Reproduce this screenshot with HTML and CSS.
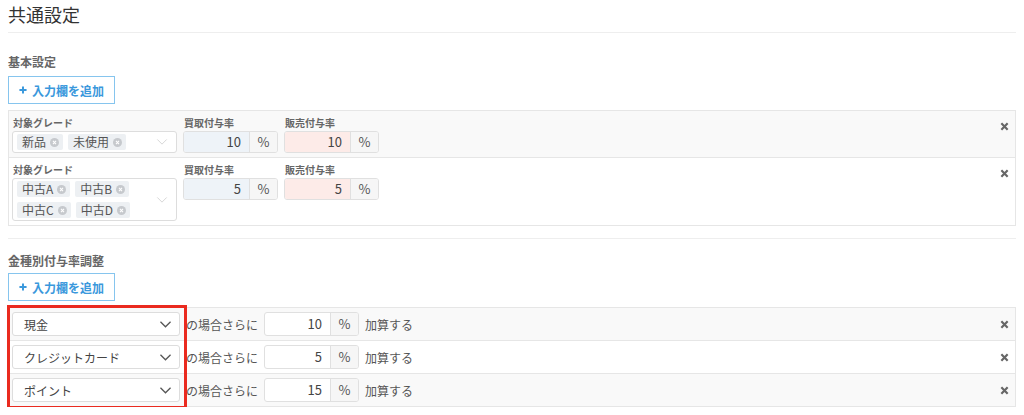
FILE: index.html
```html
<!DOCTYPE html>
<html lang="ja">
<head>
  <meta charset="UTF-8">
  <title>共通設定</title>
  <meta name="viewport" content="width=device-width, initial-scale=1.0">
  <link rel="stylesheet" href="styles.css">
</head>
<body>
  <h2 class="page-title">共通設定</h2>

  <section class="block">
    <h3 class="block-title">基本設定</h3>
    <button class="add-btn">
      <svg class="plus" viewBox="0 0 9 9"><path d="M4.5 0.5V8.5M0.5 4.5H8.5"/></svg>
      入力欄を追加
    </button>

    <div class="rows">
      <div class="row grade-row">
        <div class="field">
          <div class="field-label">対象グレード</div>
          <div class="tag-select">
            <div class="tags">
              <span class="tag">新品<i class="tag-x"><svg viewBox="0 0 10 10"><circle cx="5" cy="5" r="5"/><path d="M3.3 3.3L6.7 6.7M6.7 3.3L3.3 6.7"/></svg></i></span>
              <span class="tag">未使用<i class="tag-x"><svg viewBox="0 0 10 10"><circle cx="5" cy="5" r="5"/><path d="M3.3 3.3L6.7 6.7M6.7 3.3L3.3 6.7"/></svg></i></span>
            </div>
            <svg class="chev light" viewBox="0 0 12 7"><path d="M0.5 0.5L6 6L11.5 0.5"/></svg>
          </div>
        </div>
        <div class="field">
          <div class="field-label">買取付与率</div>
          <div class="input-group">
            <span class="num buy">10</span><span class="addon">%</span>
          </div>
        </div>
        <div class="field">
          <div class="field-label">販売付与率</div>
          <div class="input-group">
            <span class="num sell">10</span><span class="addon">%</span>
          </div>
        </div>
        <button class="remove top"><svg viewBox="0 0 10 10"><path d="M1.5 1.5L8.5 8.5M8.5 1.5L1.5 8.5"/></svg></button>
      </div>

      <div class="row grade-row">
        <div class="field">
          <div class="field-label">対象グレード</div>
          <div class="tag-select">
            <div class="tags">
              <span class="tag">中古A<i class="tag-x"><svg viewBox="0 0 10 10"><circle cx="5" cy="5" r="5"/><path d="M3.3 3.3L6.7 6.7M6.7 3.3L3.3 6.7"/></svg></i></span>
              <span class="tag">中古B<i class="tag-x"><svg viewBox="0 0 10 10"><circle cx="5" cy="5" r="5"/><path d="M3.3 3.3L6.7 6.7M6.7 3.3L3.3 6.7"/></svg></i></span>
              <span class="tag">中古C<i class="tag-x"><svg viewBox="0 0 10 10"><circle cx="5" cy="5" r="5"/><path d="M3.3 3.3L6.7 6.7M6.7 3.3L3.3 6.7"/></svg></i></span>
              <span class="tag">中古D<i class="tag-x"><svg viewBox="0 0 10 10"><circle cx="5" cy="5" r="5"/><path d="M3.3 3.3L6.7 6.7M6.7 3.3L3.3 6.7"/></svg></i></span>
            </div>
            <svg class="chev light" viewBox="0 0 12 7"><path d="M0.5 0.5L6 6L11.5 0.5"/></svg>
          </div>
        </div>
        <div class="field">
          <div class="field-label">買取付与率</div>
          <div class="input-group">
            <span class="num buy">5</span><span class="addon">%</span>
          </div>
        </div>
        <div class="field">
          <div class="field-label">販売付与率</div>
          <div class="input-group">
            <span class="num sell">5</span><span class="addon">%</span>
          </div>
        </div>
        <button class="remove top"><svg viewBox="0 0 10 10"><path d="M1.5 1.5L8.5 8.5M8.5 1.5L1.5 8.5"/></svg></button>
      </div>
    </div>
  </section>

  <section class="block second">
    <h3 class="block-title">金種別付与率調整</h3>
    <button class="add-btn">
      <svg class="plus" viewBox="0 0 9 9"><path d="M4.5 0.5V8.5M0.5 4.5H8.5"/></svg>
      入力欄を追加
    </button>

    <div class="rows money">
      <div class="row pay-row">
        <div class="select"><span>現金</span><svg class="chev" viewBox="0 0 12 7"><path d="M0.5 0.5L6 6L11.5 0.5"/></svg></div>
        <span class="txt">の場合さらに</span>
        <div class="input-group"><span class="num">10</span><span class="addon">%</span></div>
        <span class="txt">加算する</span>
        <button class="remove"><svg viewBox="0 0 10 10"><path d="M1.5 1.5L8.5 8.5M8.5 1.5L1.5 8.5"/></svg></button>
      </div>
      <div class="row pay-row">
        <div class="select"><span>クレジットカード</span><svg class="chev" viewBox="0 0 12 7"><path d="M0.5 0.5L6 6L11.5 0.5"/></svg></div>
        <span class="txt">の場合さらに</span>
        <div class="input-group"><span class="num">5</span><span class="addon">%</span></div>
        <span class="txt">加算する</span>
        <button class="remove"><svg viewBox="0 0 10 10"><path d="M1.5 1.5L8.5 8.5M8.5 1.5L1.5 8.5"/></svg></button>
      </div>
      <div class="row pay-row">
        <div class="select"><span>ポイント</span><svg class="chev" viewBox="0 0 12 7"><path d="M0.5 0.5L6 6L11.5 0.5"/></svg></div>
        <span class="txt">の場合さらに</span>
        <div class="input-group"><span class="num">15</span><span class="addon">%</span></div>
        <span class="txt">加算する</span>
        <button class="remove"><svg viewBox="0 0 10 10"><path d="M1.5 1.5L8.5 8.5M8.5 1.5L1.5 8.5"/></svg></button>
      </div>
      <div class="highlight"></div>
    </div>
  </section>
</body>
</html>
```

FILE: styles.css
```css
body {
  font-family: "Noto Sans CJK JP", "Noto Sans", sans-serif;
  font-size: 12px;
  color: #333;
  margin: 0;
  padding: 0 8px;
  background: #fff;
}

.page-title {
  margin: 0;
  font-size: 18px;
  font-weight: normal;
  line-height: 28px;
  padding-bottom: 4px;
  border-bottom: 1px solid #eee;
  color: #333;
}

.block-title {
  margin: 21px 0 0;
  font-size: 12px;
  line-height: 16px;
  font-weight: bold;
  color: #666;
}

.second {
  margin-top: 12px;
  border-top: 1px solid #eee;
}

.second .block-title {
  margin-top: 14px;
}

.add-btn {
  display: flex;
  align-items: center;
  gap: 5px;
  height: 28px;
  margin-top: 6px;
  padding: 0 10px;
  background: #fff;
  border: 1px solid #86c5ee;
  border-radius: 0;
  color: #3a98dc;
  font-family: inherit;
  font-size: 12px;
  font-weight: bold;
  cursor: pointer;
}

.second .add-btn {
  margin-top: 4px;
}

.plus {
  width: 8px;
  height: 8px;
}

.plus path {
  stroke: #3a98dc;
  stroke-width: 2.2;
  fill: none;
}

.rows {
  margin-top: 6px;
  border-top: 1px solid #e6e6e6;
  position: relative;
}

.row {
  display: flex;
  border: 1px solid #e6e6e6;
  border-top: none;
  background: #fff;
}

.row:nth-child(odd) {
  background: #f9f9f9;
}

.grade-row {
  align-items: flex-start;
  gap: 6px;
  padding: 5px 4px 4px 3px;
}

.field-label {
  font-size: 10px;
  line-height: 14px;
  font-weight: bold;
  color: #666;
  margin: 0 0 1px 1px;
}

.tag-select {
  display: flex;
  align-items: center;
  width: 165px;
  min-height: 22px;
  box-sizing: border-box;
  border: 1px solid #ddd;
  border-radius: 3px;
  background: #fff;
  padding: 2px 8px 2px 4px;
}

.tags {
  flex: 1;
  display: flex;
  flex-wrap: wrap;
  gap: 5px 5px;
  padding-right: 20px;
}

.tag {
  display: inline-flex;
  align-items: center;
  height: 16px;
  line-height: 16px;
  padding: 0 4px 0 5px;
  background: #edf0f3;
  border-radius: 2px;
  color: #555;
  font-size: 12px;
}

.tag-x {
  display: inline-flex;
  margin-left: 4px;
}

.tag-x svg {
  width: 9px;
  height: 9px;
}

.tag-x circle {
  fill: #c6c9cd;
}

.tag-x path {
  stroke: #fff;
  stroke-width: 1.2;
}

.chev {
  width: 11px;
  height: 7px;
  flex-shrink: 0;
}

.chev path {
  fill: none;
  stroke: #555;
  stroke-width: 1.4;
}

.chev.light {
  width: 12px;
  height: 6px;
}

.chev.light path {
  stroke: #d0d0d0;
  stroke-width: 1;
}

.input-group {
  display: flex;
  width: 95px;
  height: 22px;
  box-sizing: border-box;
  border: 1px solid #e0e0e0;
  border-radius: 3px;
  overflow: hidden;
  background: #fff;
}

.num {
  flex: 1;
  text-align: right;
  padding-right: 8px;
  font-size: 13px;
  line-height: 20px;
  color: #444;
}

.num.buy {
  background: #eef3f8;
}

.num.sell {
  background: #fdebe8;
}

.addon {
  width: 27px;
  text-align: center;
  border-left: 1px solid #e0e0e0;
  background: #f6f6f6;
  font-size: 13px;
  line-height: 20px;
  color: #555;
}

.remove {
  margin-left: auto;
  margin-right: 2px;
  padding: 0;
  border: none;
  background: none;
  display: flex;
  cursor: pointer;
}

.remove.top {
  margin-top: 6px;
}

.remove svg {
  width: 9px;
  height: 9px;
}

.remove path {
  stroke: #666;
  stroke-width: 2.4;
  fill: none;
}

.pay-row {
  align-items: center;
  gap: 6px;
  padding: 4px 4px 4px 3px;
}

.select {
  display: flex;
  align-items: center;
  justify-content: space-between;
  width: 168px;
  height: 24px;
  box-sizing: border-box;
  border: 1px solid #ddd;
  border-radius: 3px;
  background: #fff;
  padding: 0 8px 0 11px;
  color: #444;
  font-size: 12px;
}

.pay-row .input-group {
  height: 24px;
}

.pay-row .num,
.pay-row .addon {
  line-height: 22px;
}

.txt {
  font-size: 12px;
  color: #555;
}

.highlight {
  position: absolute;
  left: -1px;
  top: -3px;
  width: 180px;
  height: 104px;
  box-sizing: border-box;
  border: 3px solid #ea2a1f;
  pointer-events: none;
}
```
